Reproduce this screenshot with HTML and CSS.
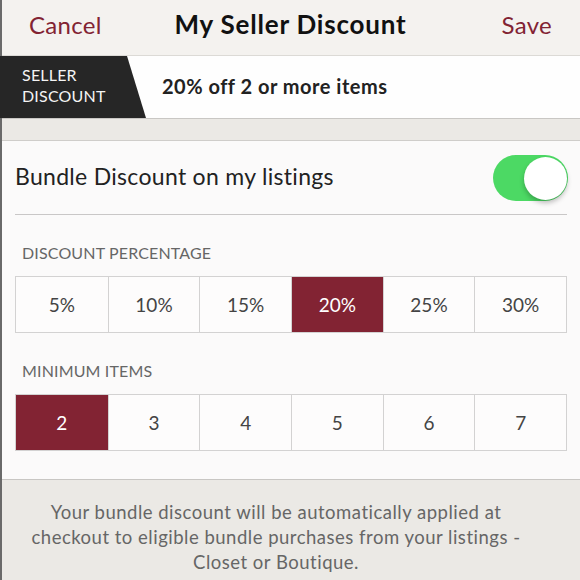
FILE: index.html
```html
<!DOCTYPE html>
<html lang="en">
<head>
  <meta charset="UTF-8">
  <meta name="viewport" content="width=device-width, initial-scale=1.0">
  <title>My Seller Discount</title>
  <link rel="stylesheet" href="styles.css">
</head>
<body>
  <div class="screen">
    <div class="nav">
      <button class="nav-btn">Cancel</button>
      <h1 class="nav-title">My Seller Discount</h1>
      <button class="nav-btn nav-save">Save</button>
    </div>

    <div class="banner">
      <div class="badge">SELLER<br>DISCOUNT</div>
      <div class="banner-text">20% off 2 or more items</div>
    </div>

    <div class="spacer"></div>

    <div class="card">
      <div class="toggle-row">
        <span class="toggle-label">Bundle Discount on my listings</span>
        <span class="switch on"><span class="knob"></span></span>
      </div>

      <h2 class="group-title">DISCOUNT PERCENTAGE</h2>
      <div class="segments">
        <div class="segment">5%</div>
        <div class="segment">10%</div>
        <div class="segment">15%</div>
        <div class="segment active">20%</div>
        <div class="segment">25%</div>
        <div class="segment">30%</div>
      </div>

      <h2 class="group-title">MINIMUM ITEMS</h2>
      <div class="segments">
        <div class="segment active">2</div>
        <div class="segment">3</div>
        <div class="segment">4</div>
        <div class="segment">5</div>
        <div class="segment">6</div>
        <div class="segment">7</div>
      </div>
    </div>

    <div class="footer">
      Your bundle discount will be automatically applied at<br>
      checkout to eligible bundle purchases from your listings -<br>
      Closet or Boutique.
    </div>
  </div>
</body>
</html>
```

FILE: styles.css
```css
:root {
  --maroon: #822333;
  --nav-bg: #f4f2ef;
  --sand: #ebe9e5;
  --card-bg: #fbfafa;
  --line: #d4d2d0;
  --text-dark: #1c1c1c;
  --text-mid: #444444;
  --text-soft: #666666;
  --green: #4cd964;
}

* {
  box-sizing: border-box;
  margin: 0;
  padding: 0;
}

body {
  width: 580px;
  height: 580px;
  overflow: hidden;
  font-family: 'Lato', 'Open Sans', sans-serif;
  background-color: var(--sand);
  color: var(--text-dark);
  -webkit-font-smoothing: antialiased;
}

.screen {
  height: 580px;
  border-left: 2px solid #6a6a6a;
  display: flex;
  flex-direction: column;
}

.nav {
  height: 56px;
  display: grid;
  grid-template-columns: 1fr auto 1fr;
  align-items: center;
  padding: 0 28px 7px 27px;
  background-color: var(--nav-bg);
  border-bottom: 1px solid #dcdad6;
}

.nav-btn {
  justify-self: start;
  background: none;
  border: none;
  font-family: inherit;
  font-size: 24px;
  letter-spacing: 0.3px;
  color: var(--maroon);
}

.nav-save {
  justify-self: end;
}

.nav-title {
  font-size: 26px;
  font-weight: 700;
  letter-spacing: 0.8px;
  color: #111111;
}

.banner {
  height: 63px;
  display: flex;
  align-items: center;
  background-color: #fefefe;
  border-bottom: 1px solid #c9c7c4;
}

.badge {
  align-self: stretch;
  width: 146px;
  margin-left: -2px;
  padding: 8px 0 0 22px;
  background-color: #262626;
  color: #f4f4f4;
  font-size: 16px;
  line-height: 21px;
  letter-spacing: 0.2px;
  clip-path: polygon(0 0, 127px 0, 146px 100%, 0 100%);
}

.banner-text {
  margin-left: 16px;
  margin-bottom: 2px;
  font-size: 20px;
  font-weight: 700;
  letter-spacing: 0.5px;
  color: #222222;
}

.spacer {
  height: 22px;
  border-bottom: 1px solid #cfcdca;
}

.card {
  height: 339px;
  padding: 0 13px 0 13px;
  background-color: var(--card-bg);
  border-bottom: 1px solid #c8c6c3;
}

.toggle-row {
  height: 74px;
  display: flex;
  justify-content: space-between;
  align-items: center;
  border-bottom: 1px solid #c9c7c7;
}

.toggle-label {
  margin-bottom: 4px;
  font-size: 23px;
  letter-spacing: 0.3px;
  color: #222222;
}

.switch {
  position: relative;
  width: 75px;
  height: 46px;
  border-radius: 23px;
  background-color: var(--green);
  margin-right: -1px;
}

.knob {
  position: absolute;
  top: 2px;
  right: 1px;
  width: 43px;
  height: 43px;
  border-radius: 50%;
  background-color: #ffffff;
  box-shadow: 0 3px 5px rgba(0, 0, 0, 0.25);
}

.group-title {
  padding: 28px 0 13px 7px;
  font-size: 16px;
  font-weight: 400;
  letter-spacing: 0.15px;
  color: var(--text-soft);
  line-height: 20px;
}

.segments {
  display: grid;
  grid-template-columns: repeat(6, 1fr);
  height: 57px;
  border: 1px solid #d3d2d2;
  background-color: #fdfcfc;
}

.segment {
  display: flex;
  align-items: center;
  justify-content: center;
  font-size: 19px;
  color: var(--text-mid);
  border-left: 1px solid #d3d2d2;
}

.segment:first-child {
  border-left: none;
}

.segment.active {
  background-color: var(--maroon);
  color: #ffffff;
}

.footer {
  flex: 1;
  padding: 20px 30px 0 0;
  text-align: center;
  font-size: 18.5px;
  letter-spacing: 0.5px;
  line-height: 25px;
  color: var(--text-soft);
}
```
